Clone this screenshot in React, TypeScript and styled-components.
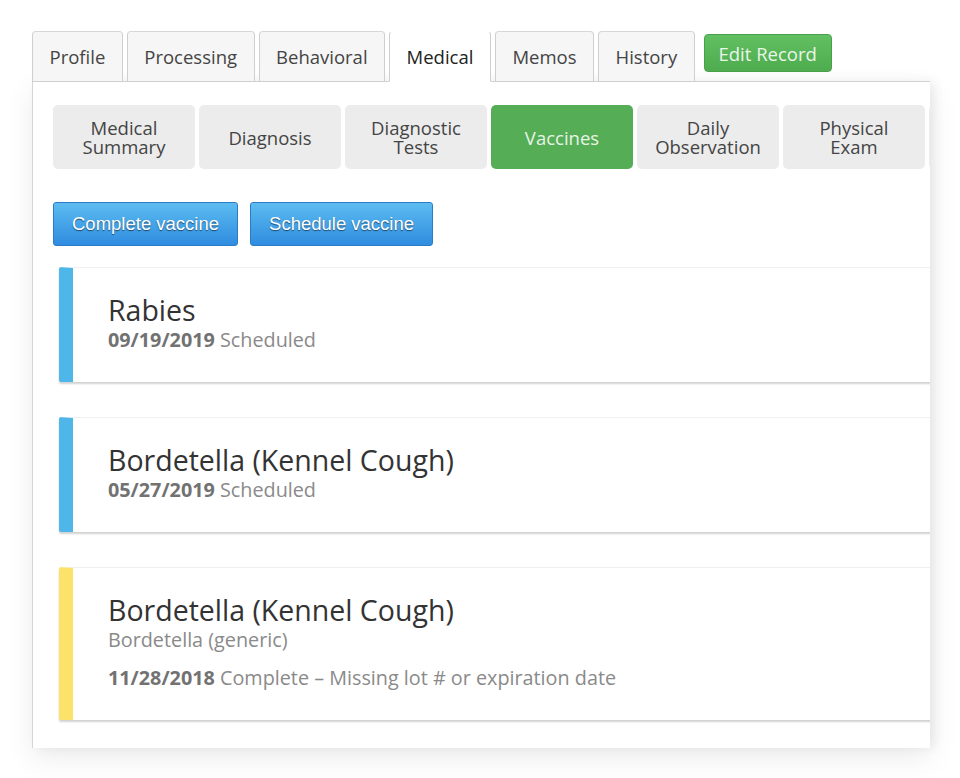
import styled, { createGlobalStyle } from 'styled-components';

const GlobalStyle = createGlobalStyle`
   html, body {
      margin: 0;
      padding: 0;
      background: #ffffff;
      font-family: 'Open Sans', 'Noto Sans', sans-serif;
   }
`;

const mainTabs = ['Profile', 'Processing', 'Behavioral', 'Medical', 'Memos', 'History'];
const subTabs = [
   ['Medical', 'Summary'],
   ['Diagnosis'],
   ['Diagnostic', 'Tests'],
   ['Vaccines'],
   ['Daily', 'Observation'],
   ['Physical', 'Exam'],
   ['Notes'],
];

type Vaccine = {
   name: string;
   brand?: string;
   date: string;
   status: string;
   tone: 'scheduled' | 'warning';
};

const vaccines: Vaccine[] = [
   { name: 'Rabies', date: '09/19/2019', status: 'Scheduled', tone: 'scheduled' },
   { name: 'Bordetella (Kennel Cough)', date: '05/27/2019', status: 'Scheduled', tone: 'scheduled' },
   {
      name: 'Bordetella (Kennel Cough)',
      brand: 'Bordetella (generic)',
      date: '11/28/2018',
      status: 'Complete – Missing lot # or expiration date',
      tone: 'warning',
   },
];

const App = () => {
   return (
      <Page>
         <GlobalStyle />
         <Frame>
            <TabBar>
               {mainTabs.map(t => (
                  <Tab key={t} $active={t === 'Medical'}>
                     {t}
                  </Tab>
               ))}
               <EditButton>Edit Record</EditButton>
            </TabBar>
            <Panel>
               <SubTabRow>
                  {subTabs.map(lines => (
                     <SubTab key={lines.join(' ')} $active={lines[0] === 'Vaccines'}>
                        {lines.map(l => (
                           <span key={l}>{l}</span>
                        ))}
                     </SubTab>
                  ))}
               </SubTabRow>
               <ActionRow>
                  <BlueButton>Complete vaccine</BlueButton>
                  <BlueButton>Schedule vaccine</BlueButton>
               </ActionRow>
               <CardList>
                  {vaccines.map((v, i) => (
                     <Card key={i} $tone={v.tone}>
                        <CardTitle>{v.name}</CardTitle>
                        {v.brand && <Brand>{v.brand}</Brand>}
                        <StatusLine $spaced={!!v.brand}>
                           <b>{v.date}</b> {v.status}
                        </StatusLine>
                     </Card>
                  ))}
               </CardList>
            </Panel>
         </Frame>
      </Page>
   );
};
export default App;

const Page = styled.div`
   width: 960px;
   height: 778px;
   padding: 31px 0 0 32px;
   box-sizing: border-box;
   overflow: hidden;
`;
const Frame = styled.div`
   width: 898px;
   display: flex;
   flex-direction: column;
`;
const TabBar = styled.div`
   display: flex;
   gap: 4px;
   align-items: flex-start;
   height: 51px;
   position: relative;
   z-index: 1;
`;
const Tab = styled.div<{ $active?: boolean }>`
   height: 51px;
   box-sizing: border-box;
   padding: 0 16.5px;
   display: flex;
   align-items: center;
   font-size: 18.5px;
   color: ${p => (p.$active ? '#222' : '#444')};
   background: ${p => (p.$active ? '#ffffff' : '#f6f6f6')};
   border: 1px solid #cfcfcf;
   border-bottom: ${p => (p.$active ? '1px solid #ffffff' : '1px solid #cfcfcf')};
   border-top-color: ${p => (p.$active ? '#ffffff' : '#d6d6d6')};
   border-radius: 4px 4px 0 0;
`;
const EditButton = styled.div`
   margin: 3px 0 0 5px;
   height: 38px;
   width: 128px;
   box-sizing: border-box;
   display: flex;
   align-items: center;
   justify-content: center;
   font-size: 18.5px;
   color: #e9f6e9;
   background: linear-gradient(#62c062, #4eab4e);
   border: 1px solid #4a9f4a;
   border-radius: 4px;
`;
const Panel = styled.div`
   margin-top: -1px;
   height: 667px;
   box-sizing: border-box;
   background: #ffffff;
   border-left: 1px solid #d4d4d4;
   border-top: 1px solid #d2d2d2;
   box-shadow: 0 10px 28px rgba(0, 0, 0, 0.08), 5px 0 10px rgba(0, 0, 0, 0.06);
   padding: 23px 0 0 20px;
   overflow: hidden;
`;
const SubTabRow = styled.div`
   display: flex;
   gap: 4px;
   width: 1100px;
`;
const SubTab = styled.div<{ $active?: boolean }>`
   flex: none;
   width: 142px;
   height: 64px;
   border-radius: 5px;
   display: flex;
   flex-direction: column;
   align-items: center;
   justify-content: center;
   font-size: 18.5px;
   line-height: 19px;
   color: ${p => (p.$active ? '#e7f4e7' : '#444')};
   background: ${p => (p.$active ? '#55ad55' : '#ececec')};
`;
const ActionRow = styled.div`
   display: flex;
   gap: 12px;
   margin-top: 33px;
`;
const BlueButton = styled.div`
   height: 44px;
   padding: 0 18px;
   box-sizing: border-box;
   display: flex;
   align-items: center;
   font-family: 'Liberation Sans', Arial, sans-serif;
   font-size: 18.5px;
   color: #ffffff;
   text-shadow: 0 1px 1px rgba(0, 0, 0, 0.55);
   background: linear-gradient(#5cbcf0, #2f8ce0);
   border: 1px solid #2b7cc6;
   border-radius: 3px;
`;
const CardList = styled.div`
   display: flex;
   flex-direction: column;
   gap: 35px;
   margin: 21px 0 0 6px;
`;
const Card = styled.div<{ $tone: 'scheduled' | 'warning' }>`
   width: 1000px;
   padding: 24px 0 31px 35px;
   background: #ffffff;
   border-top: 1px solid #f0f0f0;
   border-left: 14px solid ${p => (p.$tone === 'warning' ? '#fde26a' : '#4fb6ea')};
   border-radius: 2px;
   box-shadow: 0 2px 2px rgba(0, 0, 0, 0.18);
`;
const CardTitle = styled.div`
   font-size: 28.5px;
   line-height: 37px;
   color: #333;
`;
const Brand = styled.div`
   font-size: 19.8px;
   line-height: 22px;
   color: #8a8a8a;
`;
const StatusLine = styled.div<{ $spaced?: boolean }>`
   margin-top: ${p => (p.$spaced ? '16px' : '0')};
   font-size: 19.8px;
   line-height: 22px;
   color: #8a8a8a;
   b {
      color: #727272;
      font-weight: 700;
   }
`;
